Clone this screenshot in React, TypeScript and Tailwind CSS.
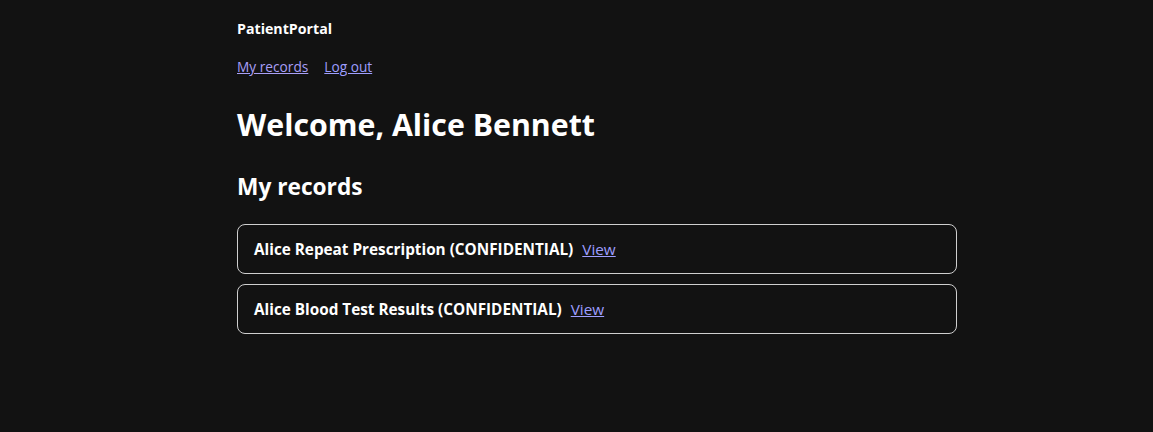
import React from "react";

export default function App() {
  const records = [
    "Alice Repeat Prescription (CONFIDENTIAL)",
    "Alice Blood Test Results (CONFIDENTIAL)",
  ];
  return (
    <div
      className="min-h-[432px] w-full bg-[#121212] text-white"
      style={{ fontFamily: '"Open Sans", "Noto Sans", sans-serif' }}
    >
      <div className="ml-[237px] w-[720px] pt-[19px]">
        <div className="text-[14.2px] font-bold leading-[20px]">PatientPortal</div>
        <nav className="mt-[18px] flex gap-[16px] text-[13.7px] leading-[20px]">
          <a href="#" className="text-[#a99ff7] underline">My records</a>
          <a href="#" className="text-[#9e9eff] underline">Log out</a>
        </nav>
        <h1 className="mt-[28px] text-[30.3px] font-bold leading-[40px]">Welcome, Alice Bennett</h1>
        <h2 className="mt-[26px] text-[22.7px] font-bold leading-[32px]">My records</h2>
        <div className="mt-[21px] flex flex-col gap-[10px]">
          {records.map((r) => (
            <div
              key={r}
              className="flex h-[50px] items-center rounded-[8px] border border-[#cfcfcf] px-[16px] text-[15.3px]"
            >
              <span className="font-bold">{r}</span>
              <a href="#" className="ml-[9px] text-[#9e9eff] underline">View</a>
            </div>
          ))}
        </div>
      </div>
    </div>
  );
}
